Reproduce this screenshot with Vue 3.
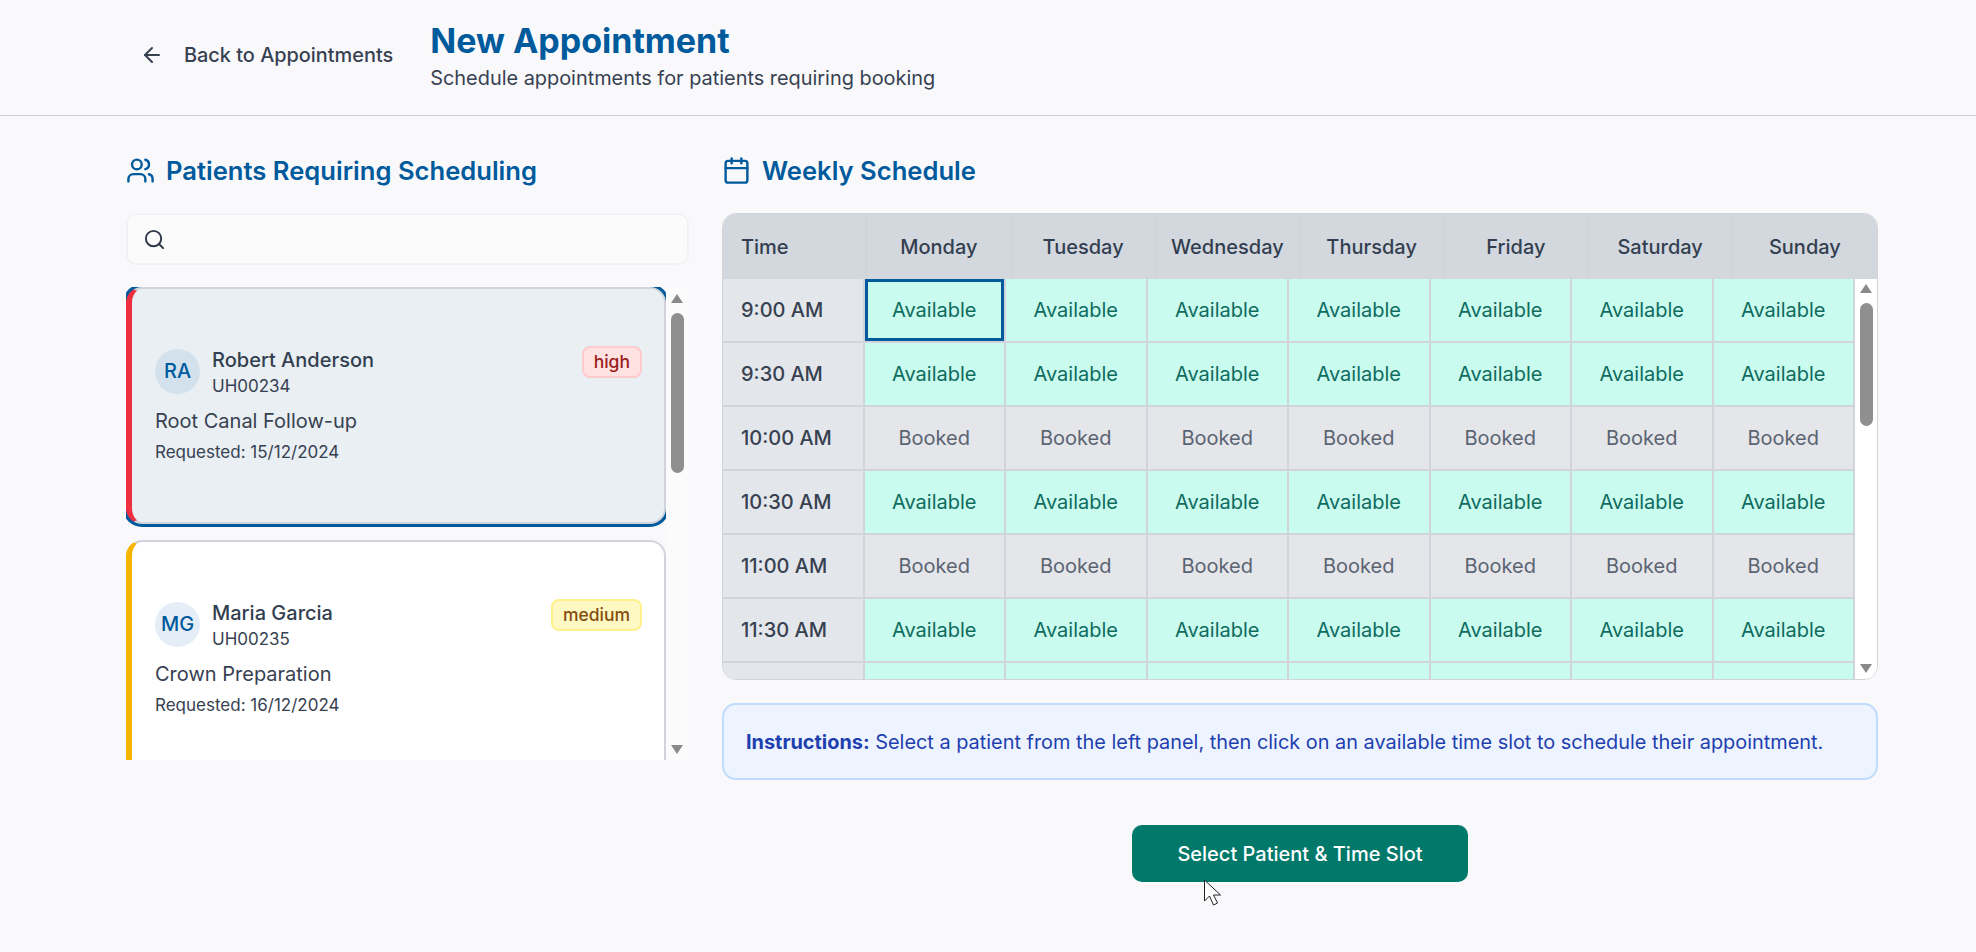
<template>
  <div class="page">
    <header class="topBar">
      <button class="backBtn">
        <svg class="backIcon" viewBox="0 0 24 24"><path d="m12 19-7-7 7-7" /><path d="M19 12H5" /></svg>
        <span>Back to Appointments</span>
      </button>
      <div class="titleBlock">
        <h1 class="title">New Appointment</h1>
        <p class="subtitle">Schedule appointments for patients requiring booking</p>
      </div>
    </header>

    <main class="content">
      <section class="leftCol">
        <h2 class="sectionTitle">
          <svg class="sectionIcon" viewBox="0 0 24 24">
            <path d="M16 21v-2a4 4 0 0 0-4-4H6a4 4 0 0 0-4 4v2" />
            <circle cx="9" cy="7" r="4" />
            <path d="M22 21v-2a4 4 0 0 0-3-3.87" />
            <path d="M16 3.13a4 4 0 0 1 0 7.75" />
          </svg>
          Patients Requiring Scheduling
        </h2>

        <div class="searchBox">
          <svg class="searchIcon" viewBox="0 0 24 24"><circle cx="11" cy="11" r="8" /><path d="m21 21-4.3-4.3" /></svg>
        </div>

        <div class="listWrap">
          <div class="listViewport">
            <div
              v-for="p in patients"
              :key="p.id"
              class="patientCard"
              :class="[p.priority, { selected: p.selected }]"
            >
              <div class="cardTop">
                <div class="who">
                  <div class="avatar">{{ p.initials }}</div>
                  <div>
                    <div class="name">{{ p.name }}</div>
                    <div class="uhid">{{ p.id }}</div>
                  </div>
                </div>
                <span class="badge">{{ p.priority }}</span>
              </div>
              <div class="treatment">{{ p.treatment }}</div>
              <div class="requested">Requested: {{ p.requested }}</div>
            </div>
          </div>
          <div class="scrollTrack listTrack">
            <i class="arrowUp"></i>
            <div class="thumb listThumb"></div>
            <i class="arrowDown"></i>
          </div>
        </div>
      </section>

      <section class="rightCol">
        <h2 class="sectionTitle">
          <svg class="sectionIcon" viewBox="0 0 24 24">
            <path d="M8 2v4" />
            <path d="M16 2v4" />
            <rect width="18" height="18" x="3" y="4" rx="2" />
            <path d="M3 10h18" />
          </svg>
          Weekly Schedule
        </h2>

        <div class="schedule">
          <div class="headRow">
            <div class="headCell timeHead">Time</div>
            <div v-for="d in days" :key="d" class="headCell">{{ d }}</div>
          </div>
          <div class="bodyWrap">
            <div class="bodyViewport">
              <div v-for="(row, r) in rows" :key="r" class="bodyRow">
                <div class="timeCell">{{ row.time }}</div>
                <div
                  v-for="(d, c) in days"
                  :key="d"
                  class="slot"
                  :class="[row.free ? 'free' : 'booked', { picked: r === 0 && c === 0 }]"
                >
                  {{ row.label }}
                </div>
              </div>
            </div>
            <div class="scrollTrack tableTrack">
              <i class="arrowUp"></i>
              <div class="thumb tableThumb"></div>
              <i class="arrowDown"></i>
            </div>
          </div>
        </div>

        <div class="instructions">
          <strong>Instructions:</strong> Select a patient from the left panel, then click on an available time slot to schedule their appointment.
        </div>

        <div class="actions">
          <button class="confirmBtn">
            Select Patient &amp; Time Slot
            <svg class="cursor" viewBox="0 0 18 27">
              <path d="M1 1v21l5-5 4 9 4-2-4-8h7z" />
            </svg>
          </button>
        </div>
      </section>
    </main>
  </div>
</template>

<script setup>
const days = ['Monday', 'Tuesday', 'Wednesday', 'Thursday', 'Friday', 'Saturday', 'Sunday']

const rows = [
  { time: '9:00 AM', free: true, label: 'Available' },
  { time: '9:30 AM', free: true, label: 'Available' },
  { time: '10:00 AM', free: false, label: 'Booked' },
  { time: '10:30 AM', free: true, label: 'Available' },
  { time: '11:00 AM', free: false, label: 'Booked' },
  { time: '11:30 AM', free: true, label: 'Available' },
  // only the top edge of this row is in view
  { time: '', free: true, label: '' }
]

const patients = [
  {
    id: 'UH00234',
    initials: 'RA',
    name: 'Robert Anderson',
    treatment: 'Root Canal Follow-up',
    requested: '15/12/2024',
    priority: 'high',
    selected: true
  },
  {
    id: 'UH00235',
    initials: 'MG',
    name: 'Maria Garcia',
    treatment: 'Crown Preparation',
    requested: '16/12/2024',
    priority: 'medium',
    selected: false
  }
]
</script>

<style>
html,
body {
  margin: 0;
  background: #f9f9fc;
}
</style>

<style scoped>
.page {
  height: 952px;
  overflow: hidden;
  background: #f9f9fc;
  color: #374151;
  font-family: Inter, "Liberation Sans", sans-serif;
}

.topBar {
  height: 116px;
  box-sizing: border-box;
  display: flex;
  align-items: center;
  padding: 0 0 5px 126px;
  gap: 21px;
  border-bottom: 1px solid #c9cdd3;
}

.backBtn {
  display: flex;
  align-items: center;
  gap: 20px;
  padding: 0 16px 0 14px;
  border: 0;
  background: none;
  font: 500 19.9px Inter, sans-serif;
  color: #374151;
}

.backIcon {
  width: 24px;
  height: 24px;
  fill: none;
  stroke: #374151;
  stroke-width: 2;
  stroke-linecap: round;
  stroke-linejoin: round;
}

.title {
  margin: 0;
  font-size: 34px;
  line-height: 42px;
  font-weight: 700;
  color: #005a9c;
}

.subtitle {
  margin: 3px 0 0;
  font-size: 19.9px;
  line-height: 26px;
  color: #374151;
}

.content {
  display: flex;
  gap: 33px;
  padding: 32px 98px 0 126px;
}

.leftCol {
  width: 563px;
  flex: none;
}

.rightCol {
  flex: 1;
}

.sectionTitle {
  display: flex;
  align-items: center;
  gap: 11px;
  height: 44px;
  margin: 0 0 21px;
  font-size: 25.6px;
  font-weight: 600;
  color: #005a9c;
}

.sectionIcon {
  width: 29px;
  height: 29px;
  fill: none;
  stroke: #005a9c;
  stroke-width: 2;
  stroke-linecap: round;
  stroke-linejoin: round;
}

.searchBox {
  height: 52px;
  box-sizing: border-box;
  display: flex;
  align-items: center;
  padding-left: 15px;
  border: 2px solid #f1f2f5;
  border-radius: 10px;
  background: #fbfbfc;
}

.searchIcon {
  width: 23px;
  height: 23px;
  fill: none;
  stroke: #2d3748;
  stroke-width: 2;
  stroke-linecap: round;
  stroke-linejoin: round;
}

.listWrap {
  display: flex;
  width: 562px;
  height: 473px;
  margin-top: 22px;
}

.listViewport {
  flex: 1;
  min-width: 0;
  overflow: hidden;
  display: flex;
  flex-direction: column;
  gap: 16px;
}

.patientCard {
  flex: none;
  height: 237px;
  box-sizing: border-box;
  display: flex;
  flex-direction: column;
  justify-content: center;
  padding: 0 22px 2px 23px;
  border: 2px solid #d1d5db;
  border-left-width: 6px;
  border-radius: 16px;
  background: #fff;
}

.patientCard.high {
  border-left-color: #ef2f3f;
}

.patientCard.medium {
  border-left-color: #f5b400;
}

.patientCard.selected {
  background: #e9eff3;
  box-shadow: 0 0 0 3px #005a9c;
}

.cardTop {
  display: flex;
  justify-content: space-between;
  align-items: flex-start;
}

.who {
  display: flex;
  align-items: center;
  gap: 12px;
}

.avatar {
  width: 45px;
  height: 45px;
  border-radius: 50%;
  display: flex;
  align-items: center;
  justify-content: center;
  background: #e5eef6;
  color: #005a9c;
  font-size: 20px;
  font-weight: 500;
}

.selected .avatar {
  background: #d3e1ec;
}

.name {
  font-size: 20px;
  line-height: 28px;
  font-weight: 500;
  color: #333f50;
}

.uhid {
  margin-top: 1px;
  font-size: 17px;
  line-height: 22px;
}

.badge {
  box-sizing: border-box;
  height: 32px;
  padding: 0 10px;
  display: flex;
  align-items: center;
  border-radius: 8px;
  border: 2px solid;
  font-size: 17.5px;
  font-weight: 500;
}

.high .badge {
  background: #fee2e2;
  border-color: #fecaca;
  color: #991b1b;
}

.medium .badge {
  background: #fef9c3;
  border-color: #fef08a;
  color: #854d0e;
}

.treatment {
  margin-top: 10px;
  font-size: 20px;
  line-height: 28px;
}

.requested {
  margin-top: 5px;
  font-size: 17px;
  line-height: 24px;
}

.scrollTrack {
  flex: none;
  width: 22px;
  box-sizing: border-box;
  display: flex;
  flex-direction: column;
  align-items: center;
}

.listTrack {
  padding: 7px 0 6px;
  background: #fbfbfc;
}

.tableTrack {
  padding: 5px 0 6px;
  background: #fff;
}

.arrowUp,
.arrowDown {
  width: 0;
  height: 0;
  border-left: 6.5px solid transparent;
  border-right: 6.5px solid transparent;
}

.arrowUp {
  border-bottom: 9px solid #8a8a8a;
}

.arrowDown {
  border-top: 9px solid #8a8a8a;
  margin-top: auto;
}

.thumb {
  width: 13px;
  border-radius: 7px;
  background: #8f8f8f;
  margin-top: 10px;
}

.listThumb {
  height: 160px;
}

.tableThumb {
  height: 123px;
}

.schedule {
  height: 467px;
  box-sizing: border-box;
  display: flex;
  flex-direction: column;
  border: 1px solid #d1d5db;
  border-radius: 14px;
  overflow: hidden;
}

.headRow {
  flex: none;
  display: grid;
  grid-template-columns: repeat(8, 1fr);
  height: 65px;
  background: #d3d8df;
}

.headCell {
  display: flex;
  align-items: center;
  justify-content: center;
  font-size: 20px;
  font-weight: 500;
  color: #333f50;
  border-right: 1px solid #ccd1d8;
}

.headCell:last-child {
  border-right: 0;
}

.timeHead {
  justify-content: flex-start;
  padding-left: 18px;
}

.bodyWrap {
  flex: 1;
  min-height: 0;
  display: flex;
}

.bodyViewport {
  flex: 1;
  min-width: 0;
  overflow: hidden;
}

.bodyRow {
  display: grid;
  grid-template-columns: repeat(8, 1fr);
  height: 64px;
}

.timeCell,
.slot {
  box-sizing: border-box;
  display: flex;
  align-items: center;
  border-right: 2px solid #d1d5db;
  border-bottom: 2px solid #d1d5db;
  font-size: 20px;
}

.timeCell {
  padding-left: 18px;
  background: #e3e6ea;
  font-weight: 500;
}

.slot {
  justify-content: center;
}

.free {
  background: #c9fbee;
  color: #0f6b60;
}

.booked {
  background: #e4e6ea;
  color: #5b6472;
}

.picked {
  box-shadow: inset 0 0 0 3px #005a9c;
}

.instructions {
  margin-top: 23px;
  height: 77px;
  box-sizing: border-box;
  display: flex;
  align-items: center;
  white-space: pre-wrap;
  padding: 0 22px;
  border: 2px solid #bfdbfe;
  border-radius: 14px;
  background: #eef4ff;
  color: #1e40af;
  font-size: 19.9px;
}

.actions {
  display: flex;
  justify-content: center;
  margin-top: 45px;
}

.confirmBtn {
  position: relative;
  width: 336px;
  height: 57px;
  border: 0;
  border-radius: 10px;
  background: #00796b;
  color: #fff;
  font: 500 20px Inter, sans-serif;
}

.cursor {
  position: absolute;
  left: 71px;
  top: 54px;
  width: 19px;
  height: 27px;
  fill: #fff;
  stroke: #222;
  stroke-width: 1;
}
</style>
